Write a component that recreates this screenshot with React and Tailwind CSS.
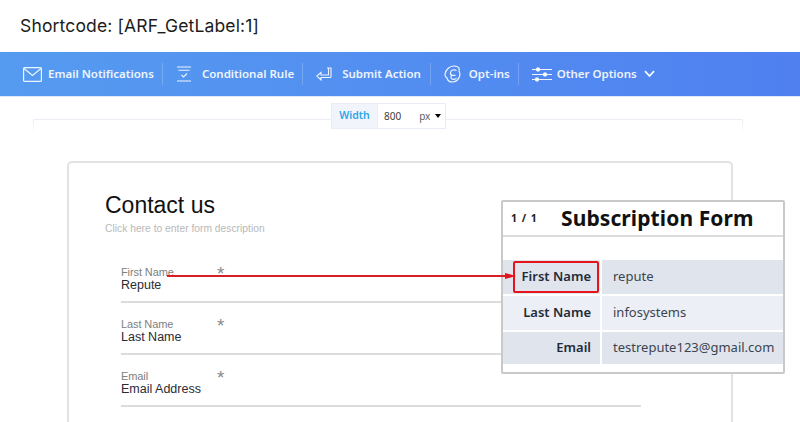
import React from "react";

const Sep = () => <div className="w-px h-[22px] bg-white/20" />;

const Item = ({ icon, label, gap = "gap-[6px]", ml }) => (
  <div className={`flex items-center ${gap} ${ml}`}>
    {icon}
    <span className="text-[11.5px] font-semibold text-white/90 tracking-[0]">{label}</span>
  </div>
);

const Field = ({ label, value, mt }) => (
  <div className={`relative ml-[46px] mr-[46px] h-[39px] border-b-2 border-[#dcdcdc] ${mt}`}>
    <div className="flex items-start">
      <span className="w-[96px] text-[11px] leading-[12px] mt-[2px] text-[#808080] tracking-[-0.1px]">{label}</span>
      <span className="text-[19px] leading-[19px] text-[#8a8a8a]">*</span>
    </div>
    <div className="text-[12.5px] leading-[14px] text-[#2b2b33] -mt-[5px]">{value}</div>
  </div>
);

const Row = ({ label, value, bg, h }) => (
  <div className={`flex ${h} border-b-2 border-white`}>
    <div className={`w-[97px] ${bg} flex items-center justify-end pr-[9px] text-[13px] font-semibold text-[#222b38]`}>{label}</div>
    <div className={`ml-[2px] flex-1 ${bg} flex items-center pl-[11px] text-[13px] text-[#3c4450]`}>{value}</div>
  </div>
);

export default function App() {
  return (
    <div className="relative w-[800px] h-[422px] overflow-hidden bg-white font-['Liberation_Sans',sans-serif]">
      <div className="h-[52px] pl-[20px] pt-[14px] text-[17.5px] leading-[24px] text-[#1c1c1c] font-['Inter',sans-serif] tracking-[0.15px]">
        Shortcode: [ARF_GetLabel:1]
      </div>

      <div className="h-[45px] flex items-center pl-[23px] bg-gradient-to-r from-[#559bf0] to-[#5080f0] font-['Noto_Sans',sans-serif] border-b border-[#dfe9fb]">
        <Item
          label="Email Notifications"
          icon={
            <svg width="19" height="15" viewBox="0 0 19 15" fill="none" stroke="#fff" strokeOpacity="0.9" strokeWidth="1.2">
              <rect x="0.6" y="0.6" width="17.8" height="13.8" rx="1" />
              <path d="M1 1.5 L9.5 8.5 L18 1.5" />
            </svg>
          }
        />
        <div className="w-[8px]" />
        <Sep />
        <div className="w-[13px]" />
        <Item
          gap="gap-[10px]"
          label="Conditional Rule"
          icon={
            <svg width="16" height="16" viewBox="0 0 16 16" fill="none" stroke="#fff" strokeOpacity="0.9" strokeWidth="1.1">
              <path d="M1 1h14M2.5 4.2h11M5.5 9l2 2 3.5-3.5M1 15h14" />
            </svg>
          }
        />
        <div className="w-[8px]" />
        <Sep />
        <div className="w-[13px]" />
        <Item
          gap="gap-[9px]"
          label="Submit Action"
          icon={
            <svg width="17" height="15" viewBox="0 0 17 15" fill="none" stroke="#fff" strokeOpacity="0.9" strokeWidth="1.1">
              <path d="M11 1h4v8.5a1 1 0 0 1-1 1H5V13L0.8 9 5 5.5V8h7.5V1" />
            </svg>
          }
        />
        <div className="w-[9px]" />
        <Sep />
        <div className="w-[13px]" />
        <Item
          gap="gap-[8px]"
          label="Opt-ins"
          icon={
            <svg width="17" height="18" viewBox="0 0 17 18" fill="none" stroke="#fff" strokeOpacity="0.9" strokeWidth="1.2">
              <path d="M4 3.5C6 1.5 10 .5 13 1.5c2 .8 2.5 3 2 4.5.8 1.5 1.2 3.5.5 5.5-1 3-4 5.5-7.5 5.5C5.5 17 3.5 15 3 13 1.5 12 .8 10 1.2 8.5 1.5 6.5 2.5 5 4 3.5Z" />
              <path d="M12.5 5.5C10 4 7 5 6.5 7.5c-.3 1.6.5 2.5 1.6 2.8-1.3.5-1.6 2.4-.4 3.4 1.5 1.2 3.8.6 4.8-.7M8 10.3h3.5" />
            </svg>
          }
        />
        <div className="w-[8px]" />
        <Sep />
        <div className="w-[13px]" />
        <Item
          gap="gap-[5px]"
          label="Other Options"
          icon={
            <svg width="20" height="15" viewBox="0 0 20 15" fill="none" stroke="#fff" strokeOpacity="0.9" strokeWidth="1.1">
              <path d="M0 2.5h20M0 7.5h20M0 12.5h20" />
              <circle cx="6" cy="2.5" r="1.6" fill="#fff" />
              <circle cx="13" cy="7.5" r="1.6" fill="#fff" />
              <circle cx="5" cy="12.5" r="1.6" fill="#fff" />
            </svg>
          }
        />
        <svg className="ml-[7px]" width="11" height="8" viewBox="0 0 11 8" fill="none" stroke="#fff" strokeOpacity="0.95" strokeWidth="1.8">
          <path d="M1 1.2 L5.5 6 L10 1.2" />
        </svg>
      </div>

      <div className="relative h-[64px]">
        <div className="absolute left-[33px] top-[22px] w-[710px] h-[14px] border-t border-x border-[#ebedf5] [mask-image:linear-gradient(to_bottom,black,transparent)]" />
        <div className="absolute left-[331px] top-[6px] w-[115px] h-[26px] flex bg-white border border-[#e9edf6] font-['Noto_Sans',sans-serif]">
          <div className="w-[46px] bg-[#f1f4fb] flex items-center justify-center text-[10.5px] font-semibold text-[#2fa5ea] border-r border-[#e9edf6]">Width</div>
          <div className="flex-1 flex items-center text-[10px] text-[#3d3d3d] pl-[6px]">
            <span>800</span>
            <span className="ml-[18px] text-[#5f5f5f]">px</span>
            <span className="ml-[5px] w-0 h-0 border-x-[3.5px] border-x-transparent border-t-[4px] border-t-black" />
          </div>
        </div>
      </div>

      <div className="mx-[67px] h-[300px] border-2 border-b-0 border-[#e2e2e2] rounded-t-[5px] pt-[29px] pl-[36px]">
        <div className="text-[23px] leading-[26px] text-[#111]">Contact us</div>
        <div className="text-[10.3px] leading-[12px] mt-[5px] text-[#b9b9b9]">Click here to enter form description</div>
        <div className="-ml-[36px] pl-[8px]">
          <div className="mt-[29px]" />
          <div className="w-[612px] ml-[-2px]">
            <Field label="First Name" value="Repute" />
            <Field label="Last Name" value="Last Name" mt="mt-[13px]" />
            <Field label="Email" value="Email Address" mt="mt-[13px]" />
          </div>
        </div>
      </div>

      <div className="absolute left-[501px] top-[200px] w-[284px] h-[174px] bg-white border-2 border-[#c9c9c9] rounded-[2px] font-['Noto_Sans',sans-serif]">
        <div className="h-[35px] flex items-center border-b-2 border-[#dcdcdc] pl-[8px]">
          <span className="w-[50px] text-[10.5px] font-bold tracking-[1px] text-[#222]">1 / 1</span>
          <span className="text-[21px] font-bold text-[#111] tracking-[0.1px]">Subscription Form</span>
        </div>
        <div className="h-[23px]" />
        <Row label="First Name" value="repute" bg="bg-[#dfe4ed]" h="h-[36px]" />
        <Row label="Last Name" value="infosystems" bg="bg-[#eceff5]" h="h-[36px]" />
        <Row label="Email" value="testrepute123@gmail.com" bg="bg-[#dfe4ed]" h="h-[34px]" />
      </div>

      <div className="absolute left-[513px] top-[261px] w-[86px] h-[32px] border-2 border-[#e5141c] rounded-[2px]" />
      <div className="absolute left-[167px] top-[275px] w-[341px] h-[2px] bg-[#d81f26]" />
      <svg className="absolute left-[505px] top-[270px]" width="12" height="12" viewBox="0 0 12 12">
        <path d="M0 3 L11 6 L0 9Z" fill="#e5141c" />
      </svg>
    </div>
  );
}
